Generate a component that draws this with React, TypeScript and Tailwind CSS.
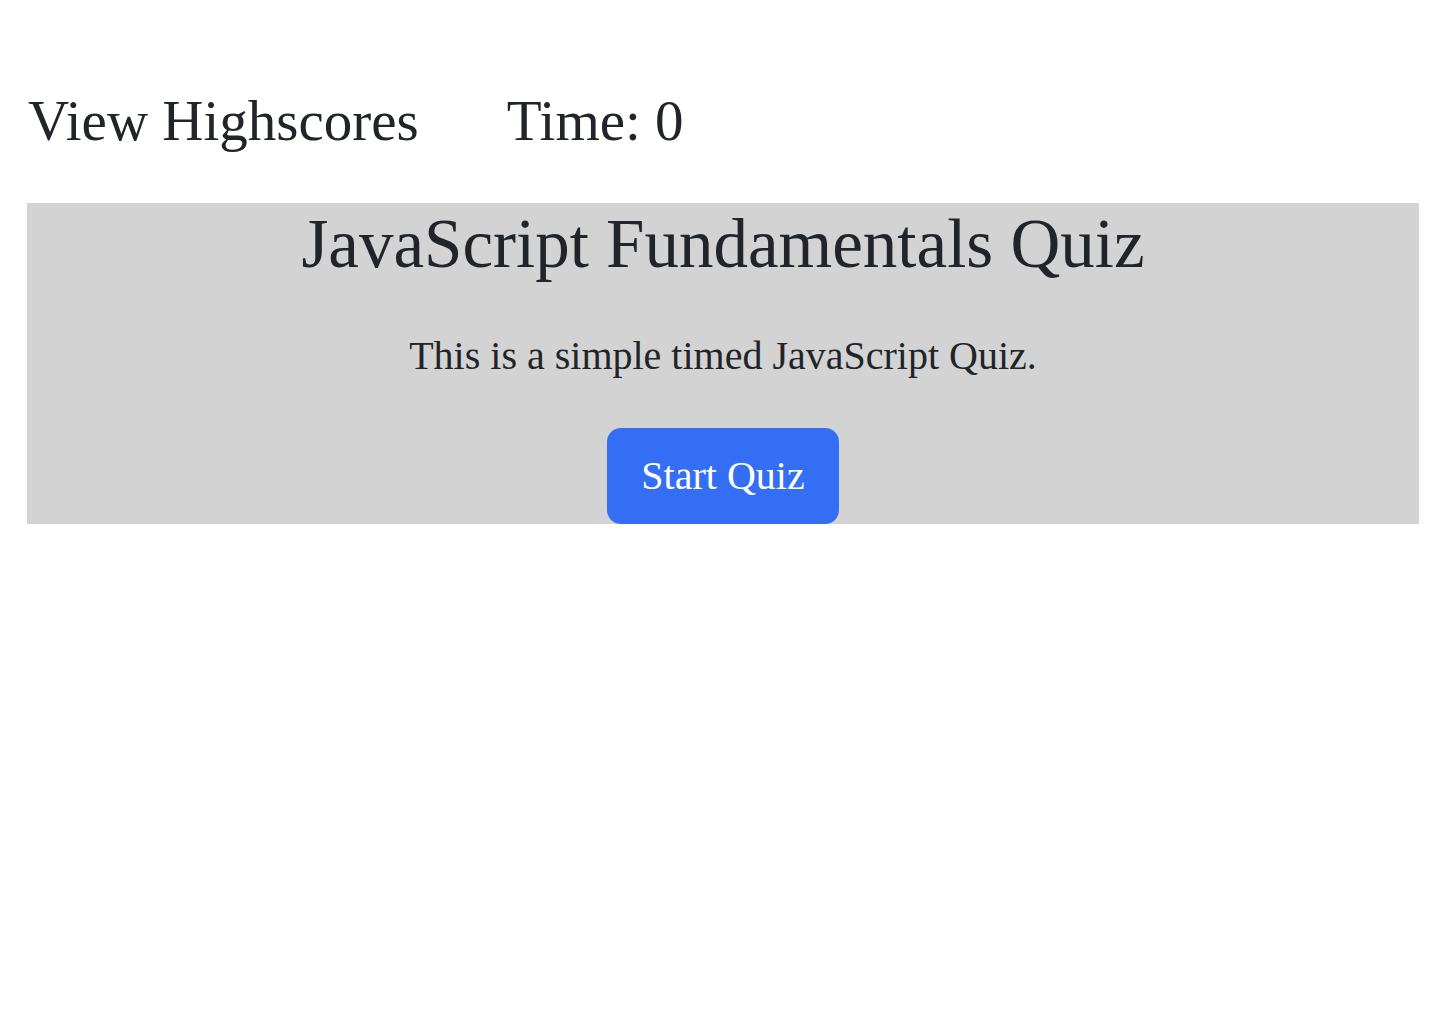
export default function App() {
  return (
    <div
      className="min-h-screen bg-white pl-[27px] pr-[29px] pt-[89px] text-[#212529]"
      style={{ fontFamily: '"Liberation Serif", "Times New Roman", serif' }}
    >
      <header className="flex items-baseline gap-[88px] text-[57px] leading-[64px]">
        <a className="pl-[1px]" href="#">View Highscores</a>
        <span>Time: 0</span>
      </header>

      <main className="mt-[50px] bg-[#d3d3d3] text-center">
        <h1 className="pt-[2px] text-[69px] leading-[79px]">JavaScript Fundamentals Quiz</h1>
        <p className="my-[49px] text-[40px] leading-[46px]">This is a simple timed JavaScript Quiz.</p>
        <button className="rounded-[14px] bg-[#346ef4] px-[34px] py-[24px] text-[40px] leading-[48px] text-white">
          Start Quiz
        </button>
      </main>
    </div>
  );
}
